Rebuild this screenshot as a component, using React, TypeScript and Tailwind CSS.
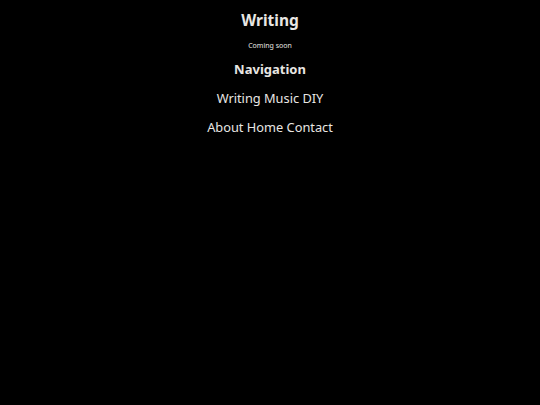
export default function App() {
  return (
    <div
      className="min-h-[405px] bg-black text-[#e8e6e3] text-center"
      style={{ fontFamily: '"Noto Sans", "Open Sans", sans-serif' }}
    >
      <header className="pt-[10px]">
        <h1 className="text-[15.5px] font-bold leading-[20px]">Writing</h1>
        <p className="mt-[11px] text-[7px] leading-[10px]">Coming soon</p>
      </header>
      <nav className="mt-[8px]">
        <h2 className="text-[13px] font-bold leading-[20px]">Navigation</h2>
        <div className="mt-[9px] text-[12.8px] leading-[20px]">
          <span>Writing</span> <span>Music</span> <span>DIY</span>
        </div>
        <div className="mt-[9px] text-[12.8px] leading-[20px]">
          <span>About</span> <span>Home</span> <span>Contact</span>
        </div>
      </nav>
    </div>
  );
}
